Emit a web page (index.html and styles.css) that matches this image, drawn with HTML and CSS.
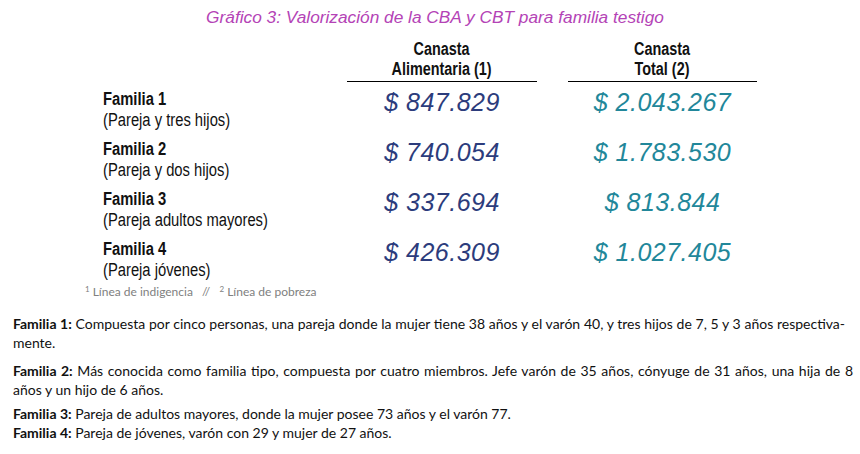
FILE: index.html
```html
<!DOCTYPE html>
<html lang="es">
<head>
<meta charset="utf-8">
<title>Gráfico 3</title>
<link rel="stylesheet" href="styles.css">
</head>
<body>
<div class="page">
  <h1 class="title">Gráfico 3: Valorización de la CBA y CBT para familia testigo</h1>
  <div class="table">
    <div class="head-row">
      <div class="spacer"></div>
      <div class="col-head"><span class="narrow">Canasta<br>Alimentaria (1)</span></div>
      <div class="col-head"><span class="narrow">Canasta<br>Total (2)</span></div>
    </div>
    <div class="row">
      <div class="fam"><span class="fam-name">Familia 1</span><span class="fam-desc">(Pareja y tres hijos)</span></div>
      <div class="val cba">$ 847.829</div>
      <div class="val cbt">$ 2.043.267</div>
    </div>
    <div class="row">
      <div class="fam"><span class="fam-name">Familia 2</span><span class="fam-desc">(Pareja y dos hijos)</span></div>
      <div class="val cba">$ 740.054</div>
      <div class="val cbt">$ 1.783.530</div>
    </div>
    <div class="row">
      <div class="fam"><span class="fam-name">Familia 3</span><span class="fam-desc">(Pareja adultos mayores)</span></div>
      <div class="val cba">$ 337.694</div>
      <div class="val cbt">$ 813.844</div>
    </div>
    <div class="row">
      <div class="fam"><span class="fam-name">Familia 4</span><span class="fam-desc">(Pareja jóvenes)</span></div>
      <div class="val cba">$ 426.309</div>
      <div class="val cbt">$ 1.027.405</div>
    </div>
  </div>
  <p class="footnote"><sup>1</sup> Línea de indigencia &nbsp; // &nbsp; <sup>2</sup> Línea de pobreza</p>
  <div class="notes">
    <p class="note n1"><span class="jline l1"><b>Familia 1:</b> Compuesta por cinco personas, una pareja donde la mujer tiene 38 años y el varón 40, y tres hijos de 7, 5 y 3 años respectiva-</span>mente.</p>
    <p class="note n2"><span class="jline l2"><b>Familia 2:</b> Más conocida como familia tipo, compuesta por cuatro miembros. Jefe varón de 35 años, cónyuge de 31 años, una hija de 8</span>años y un hijo de 6 años.</p>
    <p class="note n3"><b>Familia 3:</b> Pareja de adultos mayores, donde la mujer posee 73 años y el varón 77.</p>
    <p class="note n4"><b>Familia 4:</b> Pareja de jóvenes, varón con 29 y mujer de 27 años.</p>
  </div>
</div>
</body>
</html>
```
FILE: styles.css
```css
* { box-sizing: border-box; }
html, body { margin: 0; padding: 0; background: #ffffff; }
.page { width: 860px; height: 454px; overflow: hidden; }

.title {
  margin: 0;
  padding-top: 7px;
  padding-left: 10px;
  font-family: "Liberation Sans", Arial, sans-serif;
  font-style: italic;
  font-weight: normal;
  font-size: 17.3px;
  line-height: 20px;
  color: #b443b6;
  text-align: center;
}

.table { margin-top: 12px; padding-left: 103px; }

.head-row, .row {
  display: grid;
  grid-template-columns: 213px 190px 189px;
  column-gap: 31px;
}
.col-head {
  font-family: "Liberation Sans", Arial, sans-serif;
  font-weight: bold;
  font-size: 18px;
  line-height: 20px;
  color: #111;
  text-align: center;
  border-bottom: 1px solid #000;
  padding-bottom: 2px;
}
.narrow {
  display: inline-block;
  transform: scaleX(0.8);
}

.row { margin-top: 7px; align-items: start; }
.row + .row { margin-top: 8px; }

.fam {
  display: flex;
  flex-direction: column;
  font-family: "Liberation Sans", Arial, sans-serif;
  font-size: 18px;
  line-height: 21px;
  color: #111;
  white-space: nowrap;
}
.fam-name, .fam-desc {
  display: block;
  transform: scaleX(0.82);
  transform-origin: left center;
}
.fam-name { font-weight: bold; }

.val {
  font-family: "Liberation Sans", Arial, sans-serif;
  font-style: italic;
  font-size: 25px;
  line-height: 30px;
  letter-spacing: 0.5px;
  text-align: center;
  margin-top: -2px;
}
.cba { color: #2c3c7c; }
.cbt { color: #22879a; }

.footnote {
  margin: 3px 0 0 85px;
  font-family: Lato, "Open Sans", sans-serif;
  font-size: 12px;
  line-height: 16px;
  color: #808080;
}
.footnote sup { font-size: 8px; vertical-align: 4px; line-height: 0; }

.notes { padding: 0 7px 0 13px; margin-top: 14px; }
.note {
  margin: 0;
  font-family: Lato, "Open Sans", sans-serif;
  font-size: 14px;
  line-height: 19px;
  color: #111;
  text-align: justify;
}
.jline {
  display: block;
  text-align: justify;
  text-align-last: justify;
}
.l1 { margin-right: 8px; }
.n2 { margin-top: 9px; }
.n3 { margin-top: 5px; }
.n4 { margin-top: 0; }
```
